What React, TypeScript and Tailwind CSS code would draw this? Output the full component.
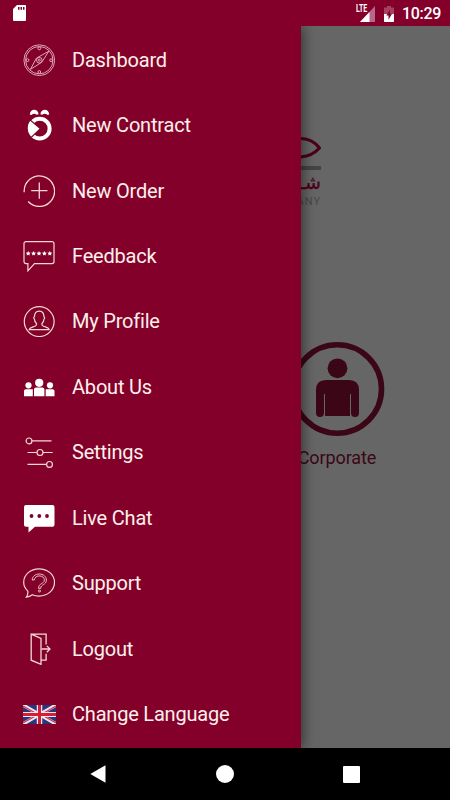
import type { ReactNode } from "react";

const line = {
  fill: "none",
  stroke: "#f3d9cf",
  strokeWidth: 1.2,
};

function Icon({ children }: { children: ReactNode }) {
  return (
    <svg viewBox="0 0 32 32" className="h-8 w-8 shrink-0">
      {children}
    </svg>
  );
}

function CompassIcon() {
  return (
    <Icon>
      <g {...line} stroke="#e6b8c4" strokeWidth={0.9}>
        <circle cx="16.3" cy="16.2" r="15.4" />
        <circle cx="16.3" cy="16.2" r="13.7" />
        <path d="M25.8 7.2 18.8 18.2 7.4 25.4 13.4 14.2Z" />
        <circle cx="16.3" cy="16.2" r="2.8" fill="#83002b" />
        <circle cx="16.3" cy="16.2" r="1" />
        <circle cx="16.3" cy="4.4" r="1.4" />
        <circle cx="16.3" cy="28" r="1.4" />
        <circle cx="4.5" cy="16.2" r="1.4" />
        <circle cx="28.1" cy="16.2" r="1.4" />
      </g>
    </Icon>
  );
}

function ContractIcon() {
  return (
    <Icon>
      <path
        d="M6.8 5.4C7 2.600 8.800.8 11.200.8S15.300 2.600 15.600 5.200L13.800 5.800Q11.200 3.800 8.400 5.900ZM17.400 5.200C17.700 2.600 19.400.8 21.800.8S26 2.600 26.200 5.400L24.600 5.900Q21.800 3.800 19.200 5.800Z"
        fill="white"
      />
      <circle cx="16.700" cy="19.700" r="9.900" fill="none" stroke="white" strokeWidth="4" />
      <path d="M7.200 11 17.300 19.700 8.200 28.500C3 23.500 3 15.500 7.200 11Z" fill="white" stroke="#83002b" strokeWidth="1.100" />
    </Icon>
  );
}

function OrderIcon() {
  return (
    <Icon>
      <g {...line} strokeWidth={1.3}>
        <path d="M1.2 17.2A15.2 15.2 0 1 1 5.2 26.5" />
        <path d="M16.3 7.5v16.3M8.2 15.7h16.3" />
      </g>
    </Icon>
  );
}

function FeedbackIcon() {
  return (
    <Icon>
      <path d="M3 1.6h26a2 2 0 0 1 2 2v18a2 2 0 0 1-2 2H11.5l-6.600 7.200v-7.200H3a2 2 0 0 1-2-2v-18a2 2 0 0 1 2-2Z" {...line} />
      {[5.2, 10.6, 16, 21.4, 26.8].map((x) => (
        <path
          key={x}
          transform={`translate(${x} 13.3)`}
          d="M0-2.400.7-.8 2.400-.6 1.200.7 1.500 2.300 0 1.400-1.500 2.300-1.200.7-2.400-.6-.7-.8Z"
          fill="white"
        />
      ))}
    </Icon>
  );
}

function ProfileIcon() {
  return (
    <Icon>
      <g {...line} transform="translate(0 .6)">
        <circle cx="16.2" cy="16" r="14.9" />
        <path d="M13.6 18.2c-1.6-1.5-2.1-3-2.2-4.7-.9-.6-.8-2 .1-2.5 0-3.4 1.5-5.5 4.7-5.5s4.700 2.100 4.700 5.500c.9.500 1 1.900.1 2.500-.1 1.700-.6 3.200-2.200 4.700 0 1.700.3 1.900 1.600 2.400 3 1.100 5.100 1.400 5.700 2.900v.5H6.300v-.5c.6-1.500 2.700-1.800 5.700-2.900 1.300-.5 1.600-.7 1.600-2.400Z" />
      </g>
    </Icon>
  );
}

function PeopleIcon() {
  return (
    <Icon>
      <g fill="white">
        <circle cx="16.2" cy="11.8" r="4.1" />
        <circle cx="5.5" cy="14.3" r="3.1" />
        <circle cx="27" cy="14.3" r="3.1" />
        <path d="M11 25.2v-6.700q0-2 2-2h6.400q2 0 2 2v6.700ZM1 25.200v-5.300q0-1.700 1.700-1.700h7.100v7ZM31.500 25.200v-5.300q0-1.700-1.700-1.700h-7.100v7Z" />
      </g>
    </Icon>
  );
}

function SlidersIcon() {
  return (
    <Icon>
      <g {...line}>
        <path d="M9 4.9h19.5M4.5 16.5h9.2M20 16.5h9.7M4.5 28.4H23" />
        <circle cx="6" cy="4.9" r="2.9" />
        <circle cx="17" cy="16.5" r="3" />
        <circle cx="26.5" cy="28.4" r="2.9" />
      </g>
    </Icon>
  );
}

function ChatIcon() {
  return (
    <Icon>
      <path d="M3 2.9h26.5q2 0 2 2V22.800q0 2-2 2H12L5.500 30.400v-5.600H3q-2 0-2-2V4.900q0-2 2-2Z" fill="white" />
      <g fill="#83002b">
        <circle cx="8.5" cy="14" r="1.9" />
        <circle cx="16.3" cy="14" r="1.9" />
        <circle cx="24" cy="14" r="1.9" />
      </g>
    </Icon>
  );
}

function SupportIcon() {
  return (
    <Icon>
      <g {...line}>
        <path d="M4.8 24.1C2.1 21.6.7 18.6.7 15.3.7 7.5 7.6 1.8 16 1.8s15.500 5.700 15.500 13.500S24.600 29.100 16 29.100c-2.400 0-4.700-.4-6.700-1.300-1.600 1.300-3.600 2.200-6 2.300 1.400-1.800 1.800-3.700 1.500-6Z" />
        <path d="M9.2 13c0-3.300 3-6 7-6s7.200 2.500 7.200 6.200c0 4.700-5.700 4.100-5.700 8.100h-2.200c0-5.200 5.900-4.700 5.900-8.100 0-2.700-2.200-4.300-5.200-4.300s-4.600 2-4.900 4.100Z" strokeWidth=".9" />
        <circle cx="16.5" cy="24" r="1" strokeWidth=".9" />
      </g>
    </Icon>
  );
}

function LogoutIcon() {
  return (
    <Icon>
      <g {...line} strokeWidth={1.3}>
        <path d="M8.2 1.2 18 5.5v25.800L8.200 27.200ZM8.200 1.200h14.900v10.200M23.100 20.800v6.400h-5" />
        <path d="M18.5 16h8.200M23.800 12.900 27 16l-3.200 3.200" />
      </g>
    </Icon>
  );
}

function FlagIcon() {
  return (
    <svg viewBox="0 0 66 40" preserveAspectRatio="none" className="h-[19px] w-[33px] shrink-0">
      <path d="M0 0h66v40H0Z" fill="#27377f" />
      <path d="M0 0 66 40M66 0 0 40" stroke="#f3e6ee" strokeWidth="7" />
      <path d="M0 2 30 20M66 2 36 20M0 38 30 20M66 38 36 20" stroke="#d43346" strokeWidth="2.5" />
      <path d="M33 0v40M0 20h66" stroke="#f3e6ee" strokeWidth="11" />
      <path d="M33 0v40M0 20h66" stroke="#d21f36" strokeWidth="6" />
    </svg>
  );
}

const items = [
  { label: "Dashboard", icon: <CompassIcon /> },
  { label: "New Contract", icon: <ContractIcon /> },
  { label: "New Order", icon: <OrderIcon /> },
  { label: "Feedback", icon: <FeedbackIcon /> },
  { label: "My Profile", icon: <ProfileIcon /> },
  { label: "About Us", icon: <PeopleIcon /> },
  { label: "Settings", icon: <SlidersIcon /> },
  { label: "Live Chat", icon: <ChatIcon /> },
  { label: "Support", icon: <SupportIcon /> },
  { label: "Logout", icon: <LogoutIcon /> },
  { label: "Change Language", icon: <FlagIcon /> },
];

function StatusBar() {
  return (
    <header className="flex h-[26px] shrink-0 items-center justify-between bg-[#83002b] pl-[13px] pr-[9px] text-white">
      <svg viewBox="0 0 13 16" className="h-4 w-[13px]">
        <path d="M4 0h8q1 0 1 1v14q0 1-1 1H1q-1 0-1-1V4Z" fill="white" />
        <path d="M5 2h1.500v2.800H5ZM7.500 2H9v2.800H7.500ZM10 2h1.500v2.800H10Z" fill="#83002b" />
      </svg>
      <div className="flex items-center pt-px">
        <span className="mb-[10px] w-[4px] origin-left scale-x-[0.7] text-[10px] font-bold leading-none">LTE</span>
        <svg viewBox="0 0 15 16" className="h-4 w-[15px]">
          <path d="M15 0v16H0Z" fill="#b9668a" />
          <path d="M9.500 5.900V16H0Z" fill="white" />
        </svg>
        <svg viewBox="0 0 10 16" className="ml-[9px] h-4 w-[10px]">
          <path d="M3 0h4v1.600h3V8H0V1.600h3Z" fill="#a8405f" />
          <path d="M0 8h10v7.200q0 .8-.8.8H.8Q0 16 0 15.200Z" fill="white" />
          <path d="M5.900 3.700 2.300 9.500h2.200v4.300l3.500-6H5.900Z" fill="#83002b" />
        </svg>
        <span className="ml-2 text-[16px] font-medium leading-none tracking-[-0.3px]">10:29</span>
      </div>
    </header>
  );
}

function Drawer() {
  return (
    <nav className="z-10 w-[301px] shrink-0 bg-[#83002b] pt-px shadow-[2px_0_12px_rgba(0,0,0,0.5)]">
      <ul>
        {items.map((item) => (
          <li key={item.label} className="flex h-[65.45px] items-center pl-[23px]">
            <span className="flex w-[49px] shrink-0">{item.icon}</span>
            <span className="whitespace-nowrap text-[20px] leading-none tracking-[-0.2px] text-[#fdf0ea]">{item.label}</span>
          </li>
        ))}
      </ul>
    </nav>
  );
}

function HomeScreen() {
  return (
    <section className="flex min-w-0 flex-1 flex-col overflow-hidden bg-[#666666] text-[#3b0717]">
      <div className="mt-[109px] flex w-5 flex-col items-end overflow-hidden">
        <svg viewBox="0 0 20 25" className="h-[25px] w-5 shrink-0">
          <path d="M-1 3.500C8 3.700 14 7 18.500 13 14 18 8 21.500-1 22" fill="none" stroke="#4b0219" strokeWidth="3" />
        </svg>
        <div className="mt-[6px] h-1 w-full bg-[#454545]" />
        <span dir="rtl" className="mt-px font-['DejaVu_Sans',sans-serif] text-[19px] leading-[22px] text-[#4b0219] [-webkit-text-stroke:0.3px]">شـ</span>
        <span className="mt-[3px] text-[11px] leading-3 tracking-[1px] text-[#484848]">ANY</span>
      </div>
      <div className="-ml-[12px] mt-[133px] flex w-24 flex-col items-center">
        <svg viewBox="0 0 96 96" className="h-24 w-24 shrink-0">
          <circle cx="48.300" cy="48" r="44.200" fill="none" stroke="#3b0717" strokeWidth="5.600" />
          <g fill="#3b0717">
            <circle cx="48.500" cy="27.300" r="9.900" />
            <path d="M37 39h23q10 0 10 10v23q0 4-4 4t-4-4V53h-1v22H36V53h-1v19q0 4-4 4t-4-4V49q0-10 10-10Z" />
          </g>
        </svg>
        <span className="mt-[11px] text-[18px] leading-5 tracking-[-0.1px]">Corporate</span>
      </div>
    </section>
  );
}

function NavigationBar() {
  return (
    <footer className="flex h-[52px] shrink-0 items-center bg-black pl-[90px]">
      <svg viewBox="0 0 16 18" className="h-[18px] w-4">
        <path d="M15.500.3v17.400L.3 9Z" fill="white" />
      </svg>
      <div className="ml-[110px] h-[18px] w-[18px] rounded-full bg-white" />
      <div className="ml-[109px] h-[17px] w-[17px] rounded-[1px] bg-white" />
    </footer>
  );
}

export default function App() {
  return (
    <div className="flex h-[800px] w-[450px] flex-col overflow-hidden font-[Roboto,sans-serif]">
      <StatusBar />
      <main className="flex min-h-0 flex-1 overflow-hidden">
        <Drawer />
        <HomeScreen />
      </main>
      <NavigationBar />
    </div>
  );
}
